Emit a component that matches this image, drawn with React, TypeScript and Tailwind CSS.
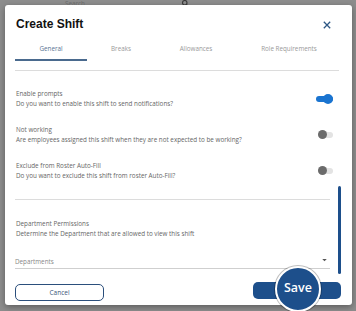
import React from 'react';

const font = { fontFamily: '"Open Sans", "Liberation Sans", sans-serif' };

const Toggle: React.FC<{ on?: boolean }> = ({ on }) => {
  if (on) {
    return (
      <div className="relative w-[17px] h-[10px] flex items-center">
        <div className="w-full h-[6px] rounded-full bg-[#1a74d0]" />
        <div className="absolute right-0 top-0 w-[10px] h-[10px] rounded-full bg-[#1a74d0]" />
      </div>
    );
  }
  return (
    <div className="relative w-[15px] h-[9px] flex items-center">
      <div className="w-full h-[6px] rounded-full bg-[#e3e3e3]" />
      <div className="absolute left-0 top-0 w-[9px] h-[9px] rounded-full bg-[#6b6b6b]" />
    </div>
  );
};

const Setting: React.FC<{ title: string; desc: string; on?: boolean }> = ({ title, desc, on }) => (
  <div className="flex items-center justify-between">
    <div className="flex flex-col gap-[2px] text-[6.3px] leading-[8px] text-[#666]">
      <span>{title}</span>
      <span>{desc}</span>
    </div>
    <Toggle on={on} />
  </div>
);

export default function App() {
  return (
    <div className="w-[356px] h-[311px] bg-[#8d8d8d] overflow-hidden flex flex-col" style={font}>
      {/* background app bar, mostly hidden behind the dialog */}
      <div className="h-[5px] flex items-end overflow-hidden text-[6.3px] leading-[8px] text-[#6f6f6f]">
        <span className="ml-[65px] translate-y-[3px]">Search</span>
        <svg className="ml-[96px] translate-y-[3px]" width="9" height="9" viewBox="0 0 24 24" fill="none" stroke="#3a3a3a" strokeWidth="3">
          <circle cx="10" cy="10" r="6" />
          <path d="M15 15l6 6" />
        </svg>
      </div>

      <div className="relative ml-[5px] w-[347px] h-[300px] bg-white rounded-[3px] shadow-[0_2px_6px_rgba(0,0,0,0.35)] px-[10px] flex flex-col">
        <div className="flex items-center justify-between pt-[10px]">
          <h1 className="text-[12px] leading-[18px] font-extrabold text-[#111] pl-px" style={{ fontFamily: '"Liberation Sans", Arial, sans-serif' }}>
            Create Shift
          </h1>
          <svg className="mr-[11px] mt-[1px]" width="8" height="8" viewBox="0 0 10 10" stroke="#2d5784" strokeWidth="1.6">
            <path d="M1 1l8 8M9 1l-8 8" />
          </svg>
        </div>

        {/* tabs */}
        <div className="mt-[12px] flex text-[6.3px] leading-[8px] text-[#9a9a9a]">
          <div className="w-[72px] flex flex-col items-center">
            <span className="text-[#5b7594]">General</span>
            <div className="mt-[6px] w-full h-[1.5px] bg-[#4a6a8e]" />
          </div>
          <span className="w-[68px] text-center">Breaks</span>
          <span className="w-[82px] text-center">Allowances</span>
          <span className="w-[104px] text-center">Role Requirements</span>
        </div>
        <div className="mt-[9px] mr-[3px] h-px bg-[#dcdcdc]" />

        <div className="mt-[19px] flex flex-col gap-[18px] pl-px mr-[9px]">
          <Setting title="Enable prompts" desc="Do you want to enable this shift to send notifications?" on />
          <Setting title="Not working" desc="Are employees assigned this shift when they are not expected to be working?" />
          <Setting title="Exclude from Roster Auto-Fill" desc="Do you want to exclude this shift from roster Auto-Fill?" />
        </div>

        <div className="mt-[19px] mr-[12px] h-px bg-[#dcdcdc]" />

        <div className="mt-[20px] pl-px flex flex-col gap-[2px] text-[6.3px] leading-[8px] text-[#666]">
          <span>Department Permissions</span>
          <span>Determine the Department that are allowed to view this shift</span>
        </div>

        <div className="mt-[20px] mr-[12px] flex items-center justify-between text-[6.3px] leading-[8px] text-[#888] border-b border-[#cfcfcf] pb-[2px]">
          <span>Departments</span>
          <svg width="5" height="3" viewBox="0 0 6 4" className="mr-[3px] -mt-[2px]">
            <path d="M0 0h6L3 3z" fill="#555" />
          </svg>
        </div>

        {/* scrollbar */}
        <div className="absolute right-[11px] top-[181px] w-[3px] h-[88px] rounded-full bg-[#1d4f8b]" />

        <div className="mt-[12px] flex items-center justify-between pr-px">
          <button className="w-[89px] h-[17px] rounded-[5px] border border-[#2b4f7c] text-[6.5px] text-[#3b5678]">
            Cancel
          </button>
          <div className="relative">
            <button className="w-[88px] h-[17px] rounded-[5px] bg-[#1d4f8b]" />
            <div className="absolute left-[22px] -top-[15px] w-[46px] h-[46px] rounded-full bg-[#1d4f8b] border-2 border-white shadow-[0_0_0_1px_rgba(0,0,0,0.25)] flex items-center justify-center">
              <span className="text-[12.5px] font-semibold text-white">Save</span>
            </div>
          </div>
        </div>
      </div>
    </div>
  );
}
